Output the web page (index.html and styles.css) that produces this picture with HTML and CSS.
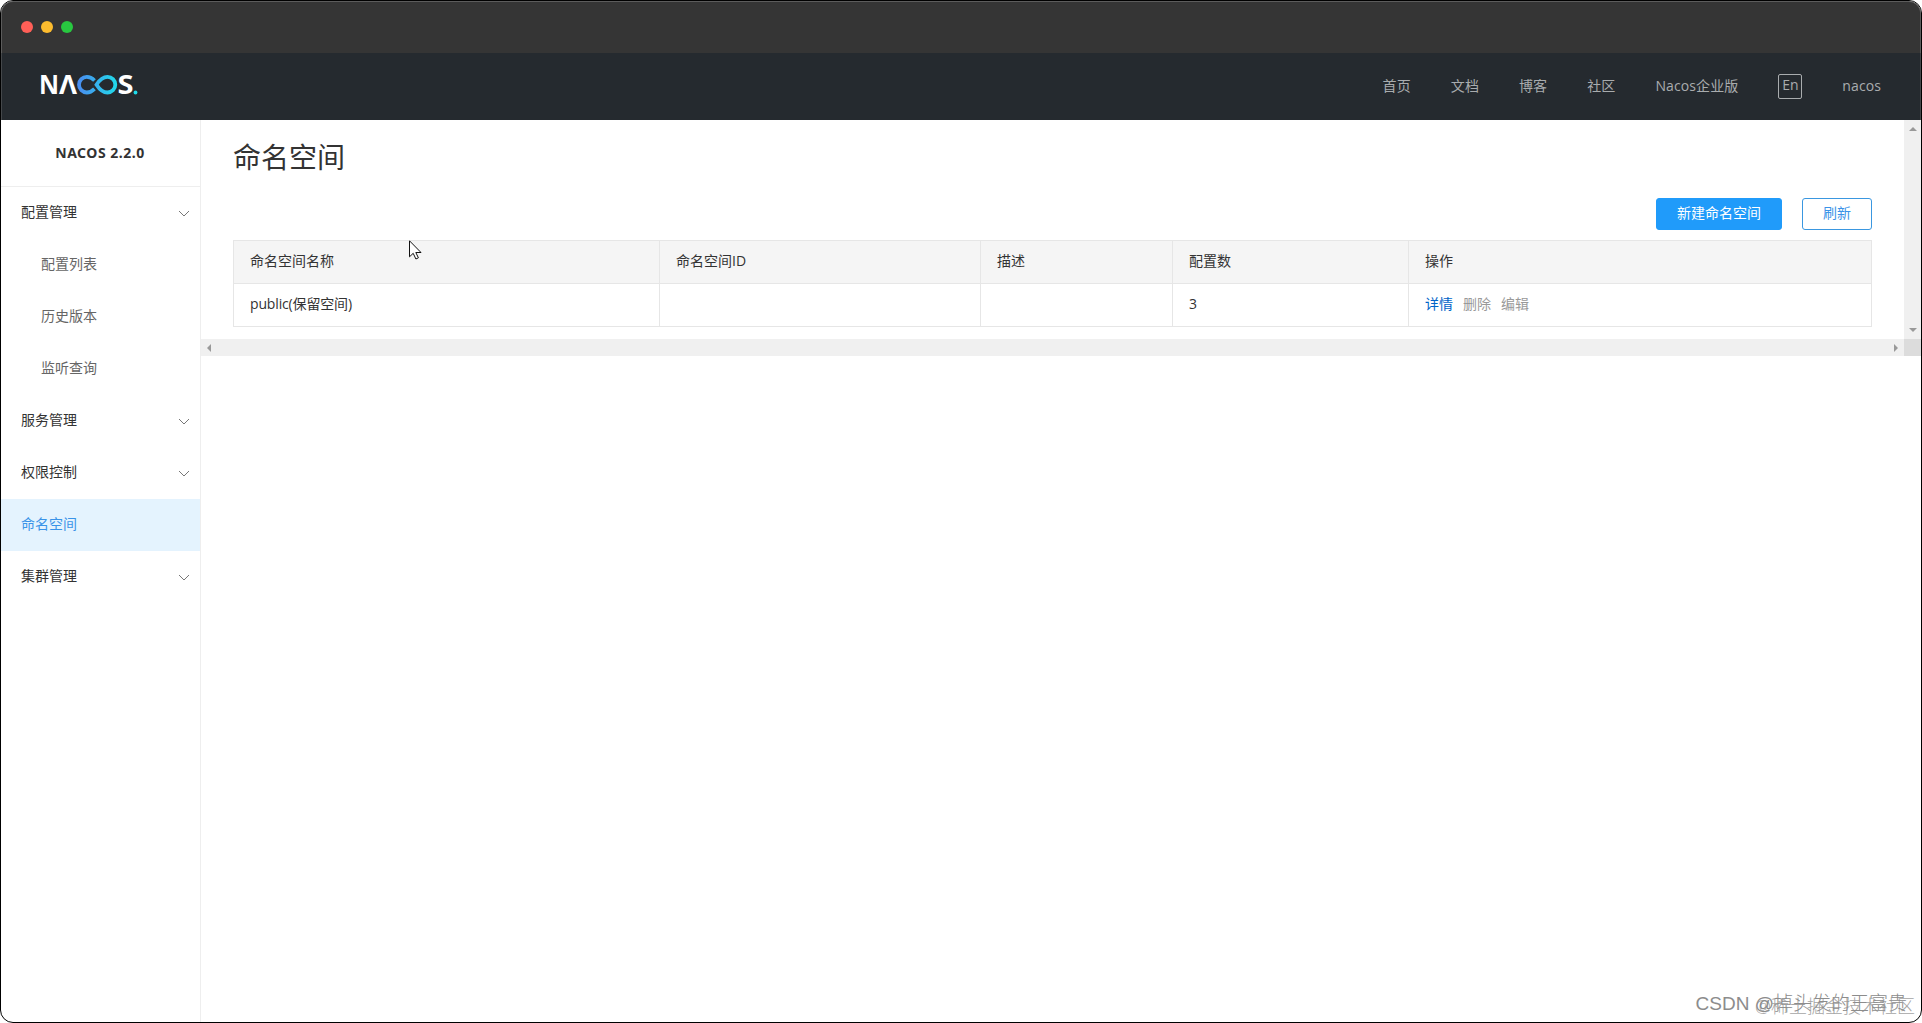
FILE: index.html
```
<!DOCTYPE html>
<html lang="zh-CN">
<head>
  <meta charset="UTF-8">
  <meta name="viewport" content="width=device-width, initial-scale=1">
  <title>Nacos</title>
  <link rel="stylesheet" href="styles.css">
</head>
<body>

<div class="window">
  <div class="titlebar">
    <span class="dot red"></span>
    <span class="dot yellow"></span>
    <span class="dot green"></span>
  </div>

  <header class="header">
    <svg class="logo" width="104" height="40" viewBox="-3 -8 104 40">
      <defs>
        <linearGradient id="loop" gradientUnits="userSpaceOnUse" x1="37" y1="0" x2="77" y2="0">
          <stop offset="0" stop-color="#4a8cf0"/>
          <stop offset="1" stop-color="#1fdcea"/>
        </linearGradient>
      </defs>
      <g class="logo-text">
        <text x="-2" y="21" textLength="20" lengthAdjust="spacingAndGlyphs">N</text>
        <text x="18" y="21" textLength="18" lengthAdjust="spacingAndGlyphs">Λ</text>
        <text x="76.500" y="21" textLength="16" lengthAdjust="spacingAndGlyphs">S</text>
      </g>
      <g fill="none" stroke="url(#loop)" stroke-width="3.800">
        <path d="M53.500 7.500C51 5 48.500 3.900 45.800 3.900a7.800 7.800 0 0 0 0 15.600C48.500 19.500 51 18.300 53.500 15.800"/>
        <path d="M55.500 11.700C58.500 7 61.500 3.900 66.500 3.900a7.800 7.800 0 0 1 0 15.600C61.500 19.500 58.500 16.400 55.500 11.700z"/>
      </g>
      <circle cx="94.500" cy="19.500" r="1.900" fill="#1fdcea"/>
    </svg>
    <nav class="nav">
      <a>首页</a>
      <a>文档</a>
      <a>博客</a>
      <a>社区</a>
      <a>Nacos企业版</a>
      <span class="lang">En</span>
      <a>nacos</a>
    </nav>
  </header>

  <div class="body">
    <aside class="sidebar">
      <h1 class="version">NACOS 2.2.0</h1>
      <ul class="menu">
        <li>配置管理<svg class="arrow" width="12" height="8" viewBox="0 0 12 8"><path d="M1 1l5 5 5-5"/></svg></li>
        <li class="sub">配置列表</li>
        <li class="sub">历史版本</li>
        <li class="sub">监听查询</li>
        <li>服务管理<svg class="arrow" width="12" height="8" viewBox="0 0 12 8"><path d="M1 1l5 5 5-5"/></svg></li>
        <li>权限控制<svg class="arrow" width="12" height="8" viewBox="0 0 12 8"><path d="M1 1l5 5 5-5"/></svg></li>
        <li class="active">命名空间</li>
        <li>集群管理<svg class="arrow" width="12" height="8" viewBox="0 0 12 8"><path d="M1 1l5 5 5-5"/></svg></li>
      </ul>
    </aside>

    <main class="main">
      <div class="view">
        <div class="content">
          <h2 class="title">命名空间</h2>
          <div class="actions">
            <button class="btn btn-primary">新建命名空间</button>
            <button class="btn btn-refresh">刷新</button>
          </div>
          <table class="table">
            <colgroup>
              <col class="col-name"><col class="col-id"><col class="col-desc"><col class="col-count"><col>
            </colgroup>
            <tr><th>命名空间名称</th><th>命名空间ID</th><th>描述</th><th>配置数</th><th>操作</th></tr>
            <tr>
              <td><span class="ns">public(保留空间)</span></td><td></td><td></td><td>3</td>
              <td><div class="ops"><a class="link">详情</a><span>删除</span><span>编辑</span></div></td>
            </tr>
          </table>
        </div>
        <div class="scroll-y"><i class="tri up"></i><i class="tri down"></i></div>
      </div>
      <div class="scroll-x">
        <div class="track"><i class="tri left"></i><i class="tri right"></i></div>
        <div class="corner"></div>
      </div>
    </main>
  </div>

  <!-- mouse pointer -->
  <svg class="cursor" width="14" height="21" viewBox="0 0 14 21">
    <path d="M.5 .8v16l3.700-3.500 2.700 5.700 2.500-1.200-2.600-5.300h5.200z" fill="#fff" stroke="#111"/>
  </svg>
  <div class="mark mark-back">@稀土掘金技术社区</div>
  <div class="mark mark-front">CSDN @掉头发的王富贵</div>
</div>

</body>
</html>
```
FILE: styles.css
```
* {
  box-sizing: border-box;
}
body {
  margin: 0;
  background: #fff;
  font-family: "Open Sans", "Noto Sans CJK SC", sans-serif;
  font-size: 14px;
  color: #333;
}
.window {
  position: relative;
  display: flex;
  flex-direction: column;
  width: 1922px;
  height: 1023px;
  border: 1px solid #000;
  border-radius: 13px;
  overflow: hidden;
}
.titlebar {
  display: flex;
  align-items: center;
  gap: 8px;
  height: 52px;
  padding: 0 19px 1px;
  background: #353535;
  border: 1px solid #5c5c5c;
  border-bottom: 0;
  border-radius: 12px 12px 0 0;
}
.dot {
  width: 12px;
  height: 12px;
  border-radius: 50%;
}
.red {
  background: #ff5f57;
}
.yellow {
  background: #fdbc2e;
}
.green {
  background: #28c840;
}
.header {
  display: flex;
  align-items: center;
  justify-content: space-between;
  height: 67px;
  padding: 0 39px 0 36px;
  background: #252a2f;
  border-left: 1px solid #45484b;
  border-right: 1px solid #45484b;
}
.logo {
  margin-bottom: 4px;
}
.logo-text {
  fill: #fff;
  font-family: "Open Sans", sans-serif;
  font-size: 26px;
  font-weight: 700;
}
.nav {
  display: flex;
  align-items: center;
  gap: 40px;
  color: #a9acae;
  line-height: 24px;
}
.nav a {
  margin-bottom: 2px;
  letter-spacing: .1px;
}
.lang {
  width: 24px;
  height: 25px;
  margin-bottom: 1px;
  border: 1px solid #a9acae;
  border-radius: 2px;
  line-height: 20px;
  text-align: center;
}
.body {
  display: flex;
  flex: 1;
}
.sidebar {
  width: 200px;
  border-right: 1px solid #eee;
}
.version {
  height: 67px;
  margin: 0;
  padding-right: 1px;
  border-bottom: 1px solid #eee;
  font-family: "Noto Sans", sans-serif;
  font-size: 14px;
  font-weight: 700;
  letter-spacing: .5px;
  line-height: 66px;
  text-align: center;
}
.menu {
  margin: 0;
  padding: 0;
  list-style: none;
}
.menu li {
  display: flex;
  align-items: center;
  justify-content: space-between;
  height: 52px;
  padding: 0 10px 4px 20px;
}
.menu .sub {
  padding-left: 40px;
  color: #666;
}
.menu .active {
  background: #e4f3fe;
  color: #3a93e8;
}
.arrow {
  margin-top: 5px;
  fill: none;
  stroke: #777;
}
.main {
  flex: 1;
}
.view {
  display: flex;
  height: 219px;
}
.content {
  flex: 1;
  padding: 16px 32px 0;
}
.title {
  margin: 0;
  font-size: 28px;
  font-weight: 400;
  line-height: 42px;
}
.actions {
  display: flex;
  justify-content: flex-end;
  gap: 20px;
  margin: 20px 0 10px;
}
.btn {
  height: 32px;
  padding: 0 0 4px;
  border: 1px solid #209bfa;
  border-radius: 3px;
  font-family: inherit;
  font-size: 14px;
}
.btn-primary {
  width: 126px;
  background: #209bfa;
  color: #fff;
}
.btn-refresh {
  width: 70px;
  border-color: #3a97e0;
  background: #fff;
  color: #3a93e8;
}
.table {
  width: 1639px;
  border-collapse: collapse;
  table-layout: fixed;
}
.col-name {
  width: 426px;
}
.col-id {
  width: 321px;
}
.col-desc {
  width: 192px;
}
.col-count {
  width: 236px;
}
.table th,
.table td {
  height: 43px;
  padding: 0 16px 4px;
  border: 1px solid #e6e6e6;
  font-weight: 400;
  text-align: left;
}
.table th {
  background: #f5f5f5;
}
.ns {
  letter-spacing: -.15px;
}
.ops {
  display: flex;
  gap: 10px;
  color: #999;
}
.link {
  color: #0064c8;
}
.scroll-y {
  display: flex;
  flex-direction: column;
  align-items: center;
  justify-content: space-between;
  width: 17px;
  padding: 7px 0;
  background: #f0f0f0;
}
.scroll-x {
  display: flex;
  height: 17px;
}
.track {
  display: flex;
  flex: 1;
  align-items: center;
  justify-content: space-between;
  padding: 0 6px;
  background: #f0f0f0;
}
.corner {
  width: 17px;
  background: #dcdcdc;
}
.tri {
  border: 4px solid transparent;
}
.up {
  border-top: 0;
  border-bottom-color: #999;
}
.down {
  border-bottom: 0;
  border-top-color: #999;
}
.left {
  border-left: 0;
  border-right-color: #999;
}
.right {
  border-right: 0;
  border-left-color: #999;
}
.cursor {
  position: absolute;
  left: 408px;
  top: 239px;
}
.mark {
  position: absolute;
  line-height: 24px;
  white-space: nowrap;
}
.mark-back {
  right: 6px;
  bottom: 4px;
  color: #a5a5a5;
  font-size: 18px;
  font-weight: 300;
}
.mark-front {
  right: 14px;
  bottom: 6px;
  color: #8c8c8c;
  font-family: "Liberation Sans", "Noto Sans CJK SC", sans-serif;
  font-size: 19px;
  font-weight: 300;
}
```
